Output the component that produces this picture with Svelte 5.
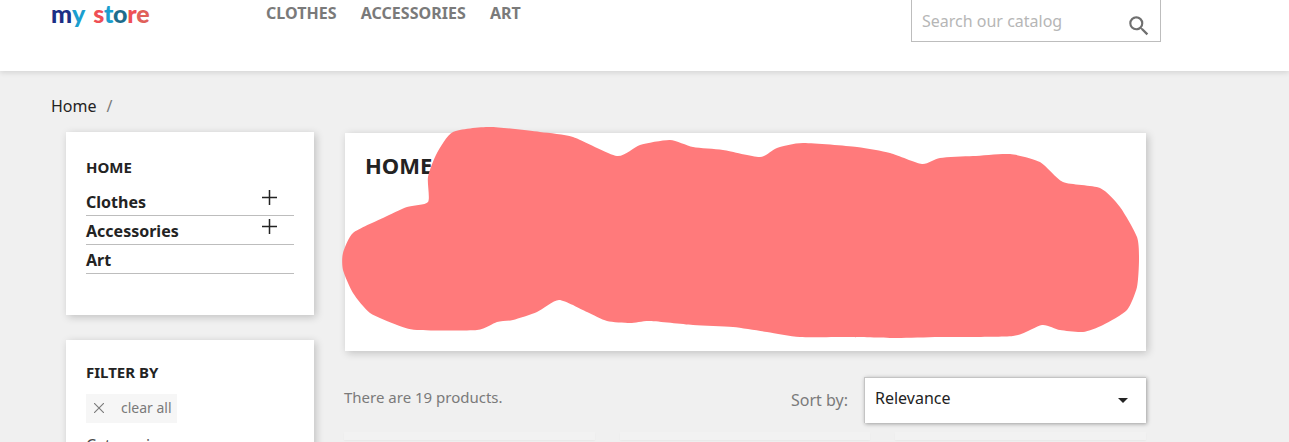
<script>
  const navLinks = ['Clothes', 'Accessories', 'Art'];
  const categories = [
    { name: 'Clothes', more: true },
    { name: 'Accessories', more: true },
    { name: 'Art', more: false }
  ];

  // outline of the red scribble, page coordinates
  const blob = [
    [428,202],[428,177],[437,153],[453,132],[490,127],[540,132],[573,137],[617,156],[640,145],[670,140],
    [693,147],[723,150],[760,157],[777,148],[803,143],[857,147],[890,153],[922,164],[940,158],[973,156],
    [1010,154],[1040,162],[1063,182],[1100,188],[1120,207],[1137,237],[1139,260],[1137,287],[1127,310],
    [1103,325],[1083,332],[1060,330],[1042,325],[1013,336],[940,337],[897,338],[850,337],[800,337],[767,332],
    [733,327],[693,325],[650,321],[630,323],[607,321],[587,312],[559,300],[537,312],[513,320],[497,322],
    [477,330],[417,330],[397,325],[370,313],[353,293],[343,270],[343,253],[353,233],[383,218],[407,207]
  ];

  function smoothPath(pts) {
    let d = `M${pts[0][0]} ${pts[0][1]}`;
    const n = pts.length;
    for (let i = 0; i < n; i++) {
      const p0 = pts[(i - 1 + n) % n], p1 = pts[i], p2 = pts[(i + 1) % n], p3 = pts[(i + 2) % n];
      const c1 = [p1[0] + (p2[0] - p0[0]) / 9, p1[1] + (p2[1] - p0[1]) / 9];
      const c2 = [p2[0] - (p3[0] - p1[0]) / 9, p2[1] - (p3[1] - p1[1]) / 9];
      d += `C${c1[0]} ${c1[1]} ${c2[0]} ${c2[1]} ${p2[0]} ${p2[1]}`;
    }
    return d + 'Z';
  }
</script>

<div class="page">
  <header class="site-header">
    <a class="logo" href="#home"><span class="navy">m</span><span class="cyan">y</span> <span class="store"><span class="red">s</span><span class="cyan">t</span><span class="teal">o</span><span class="red">r</span><span class="coral">e</span></span></a>
    <nav class="top-menu">
      {#each navLinks as link}
        <a href="#top">{link}</a>
      {/each}
    </nav>
    <form class="search">
      <span class="placeholder">Search our catalog</span>
      <svg width="26" height="26" viewBox="0 0 24 24" aria-hidden="true">
        <path fill="#6f6f6f" d="M15.5 14h-.79l-.28-.27A6.47 6.47 0 0 0 16 9.5 6.5 6.5 0 1 0 9.5 16c1.61 0 3.09-.59 4.23-1.57l.27.28v.79l5 4.99L20.49 19l-4.99-5zm-6 0C7.01 14 5 11.99 5 9.5S7.01 5 9.5 5 14 7.01 14 9.5 11.99 14 9.5 14z"/>
      </svg>
    </form>
  </header>

  <div class="crumbs"><a href="#home">Home</a><span class="slash">/</span></div>

  <div class="columns">
    <aside class="side">
      <section class="card cats">
        <h4>Home</h4>
        <ul>
          {#each categories as cat}
            <li>
              <a href="#cat">{cat.name}</a>
              {#if cat.more}
                <svg width="15" height="15" viewBox="0 0 15 15" aria-hidden="true"><path d="M7.5 0v15M0 7.5h15" stroke="#232323" stroke-width="1.5"/></svg>
              {/if}
            </li>
          {/each}
        </ul>
      </section>

      <section class="card filters">
        <h4>Filter by</h4>
        <button class="clear">
          <svg width="10" height="10" viewBox="0 0 10 10" aria-hidden="true"><path d="M0 0l10 10M10 0L0 10" stroke="#7a7a7a" stroke-width="1.1"/></svg>
          <span>clear all</span>
        </button>
        <p class="facet">Categories</p>
      </section>
    </aside>

    <main class="content">
      <section class="card hero">
        <h1>Home</h1>
      </section>

      <div class="sort-row">
        <p class="total">There are 19 products.</p>
        <div class="sort">
          <span class="sort-label">Sort by:</span>
          <div class="select">
            <span>Relevance</span>
            <i class="caret"></i>
          </div>
        </div>
      </div>

      <div class="products">
        <div class="product"></div>
        <div class="product"></div>
        <div class="product"></div>
      </div>
    </main>
  </div>

  <svg class="scribble" width="1289" height="442" viewBox="0 0 1289 442" aria-hidden="true">
    <path d={smoothPath(blob)} fill="#ff7a7b" />
  </svg>
</div>

<style>
  :global(body) {
    background: #f0f0f0;
    font-family: "Noto Sans", "Open Sans", sans-serif;
    color: #232323;
  }

  a {
    color: inherit;
    text-decoration: none;
  }

  .page {
    position: relative;
    height: 442px;
    overflow: hidden;
  }

  .site-header {
    display: flex;
    height: 71px;
    background: #fff;
    box-shadow: 0 2px 5px 0 rgba(0, 0, 0, 0.11);
    position: relative;
  }

  .logo {
    width: 215px;
    margin-left: 51px;
    padding-top: 1px;
    box-sizing: border-box;
    font-family: "Lato", sans-serif;
    font-size: 25px;
    font-weight: 900;
    line-height: 25px;
    word-spacing: 2px;
    white-space: nowrap;
  }

  .logo span { display: inline-block; }
  .store { letter-spacing: -0.4px; }
  .navy { color: #1b2f86; }
  .red { color: #ef4f55; }
  .cyan { color: #1b9fcf; }
  .teal { color: #1d6c8c; }
  .coral { color: #e0605a; }

  .top-menu {
    display: flex;
    gap: 24px;
    width: 645px;
    padding-top: 2px;
    font-size: 16px;
    font-weight: 700;
    line-height: 22px;
    letter-spacing: 0.05px;
    color: #7a7a7a;
    text-transform: uppercase;
  }

  .search {
    display: flex;
    justify-content: space-between;
    box-sizing: border-box;
    width: 250px;
    height: 42px;
    padding: 10px 8px 0 10px;
    border: 1px solid #bdbdbd;
    border-top: 0;
    background: #fff;
  }

  .placeholder {
    font-size: 16px;
    line-height: 22px;
    color: #b6b6b6;
  }

  .search svg {
    margin-top: 3px;
  }

  .crumbs {
    padding: 24px 0 0 51px;
    height: 37px;
    font-size: 16px;
    line-height: 22px;
  }

  .slash {
    margin-left: 10px;
    color: #7a7a7a;
  }

  .columns {
    display: flex;
    gap: 31px;
    padding-left: 66px;
  }

  .side {
    display: flex;
    flex-direction: column;
    gap: 25px;
    width: 248px;
  }

  .card {
    box-sizing: border-box;
    background: #fff;
    box-shadow: 2px 2px 8px 0 rgba(0, 0, 0, 0.2);
  }

  .cats {
    height: 183px;
    padding: 25px 20px 0;
  }

  h4 {
    margin: 0;
    font-size: 15px;
    font-weight: 700;
    line-height: 20px;
    text-transform: uppercase;
  }

  ul {
    margin: 10px 0 0;
    padding: 0;
    list-style: none;
  }

  li {
    display: flex;
    justify-content: space-between;
    box-sizing: border-box;
    height: 29px;
    padding: 4px 17px 0 0;
    border-bottom: 1px solid #bdbdbd;
    font-size: 16px;
    font-weight: 700;
    line-height: 22px;
  }

  li svg {
    margin-top: -1px;
  }

  .filters {
    height: 160px;
    padding: 22px 20px 0;
  }

  .clear {
    display: flex;
    align-items: center;
    gap: 17px;
    box-sizing: border-box;
    height: 29px;
    width: 91px;
    margin-top: 12px;
    padding: 0 0 2px 8px;
    border: 0;
    background: #f6f6f6;
    font: inherit;
    font-size: 14px;
    color: #7a7a7a;
    white-space: nowrap;
  }

  .facet {
    margin: 11px 0 0;
    font-size: 16px;
    line-height: 22px;
    color: #4a4a4a;
  }

  .content {
    width: 801px;
    padding-top: 1px;
  }

  .hero {
    height: 218px;
    padding: 18px 20px 0;
  }

  h1 {
    margin: 0;
    font-size: 22px;
    font-weight: 700;
    line-height: 28px;
    text-transform: uppercase;
  }

  .sort-row {
    display: flex;
    justify-content: space-between;
    align-items: flex-start;
    margin-top: 26px;
  }

  .total {
    margin: 10px 0 0 -1px;
    font-size: 15px;
    line-height: 20px;
    color: #7a7a7a;
  }

  .sort {
    display: flex;
    align-items: center;
    gap: 16px;
  }

  .sort-label {
    font-size: 16px;
    color: #7a7a7a;
  }

  .select {
    display: flex;
    align-items: center;
    justify-content: space-between;
    box-sizing: border-box;
    width: 282px;
    height: 46px;
    padding: 0 18px 5px 10px;
    border-top: 1px solid #c4c4c4;
    border-left: 1px solid #c4c4c4;
    background: #fff;
    font-size: 16px;
    box-shadow: 1px 1px 4px 0 rgba(0, 0, 0, 0.35);
  }

  .caret {
    margin-top: 5px;
    border-left: 5px solid transparent;
    border-right: 5px solid transparent;
    border-top: 5px solid #232323;
  }

  .products {
    display: flex;
    gap: 25px;
    margin-top: 9px;
    margin-left: -1px;
  }

  .product {
    width: 251px;
    height: 8px;
    background: #f2f2f2;
    box-shadow: 0 1px 2px rgba(0, 0, 0, 0.04);
  }

  .scribble {
    position: absolute;
    top: 0;
    left: 0;
    pointer-events: none;
  }
</style>
